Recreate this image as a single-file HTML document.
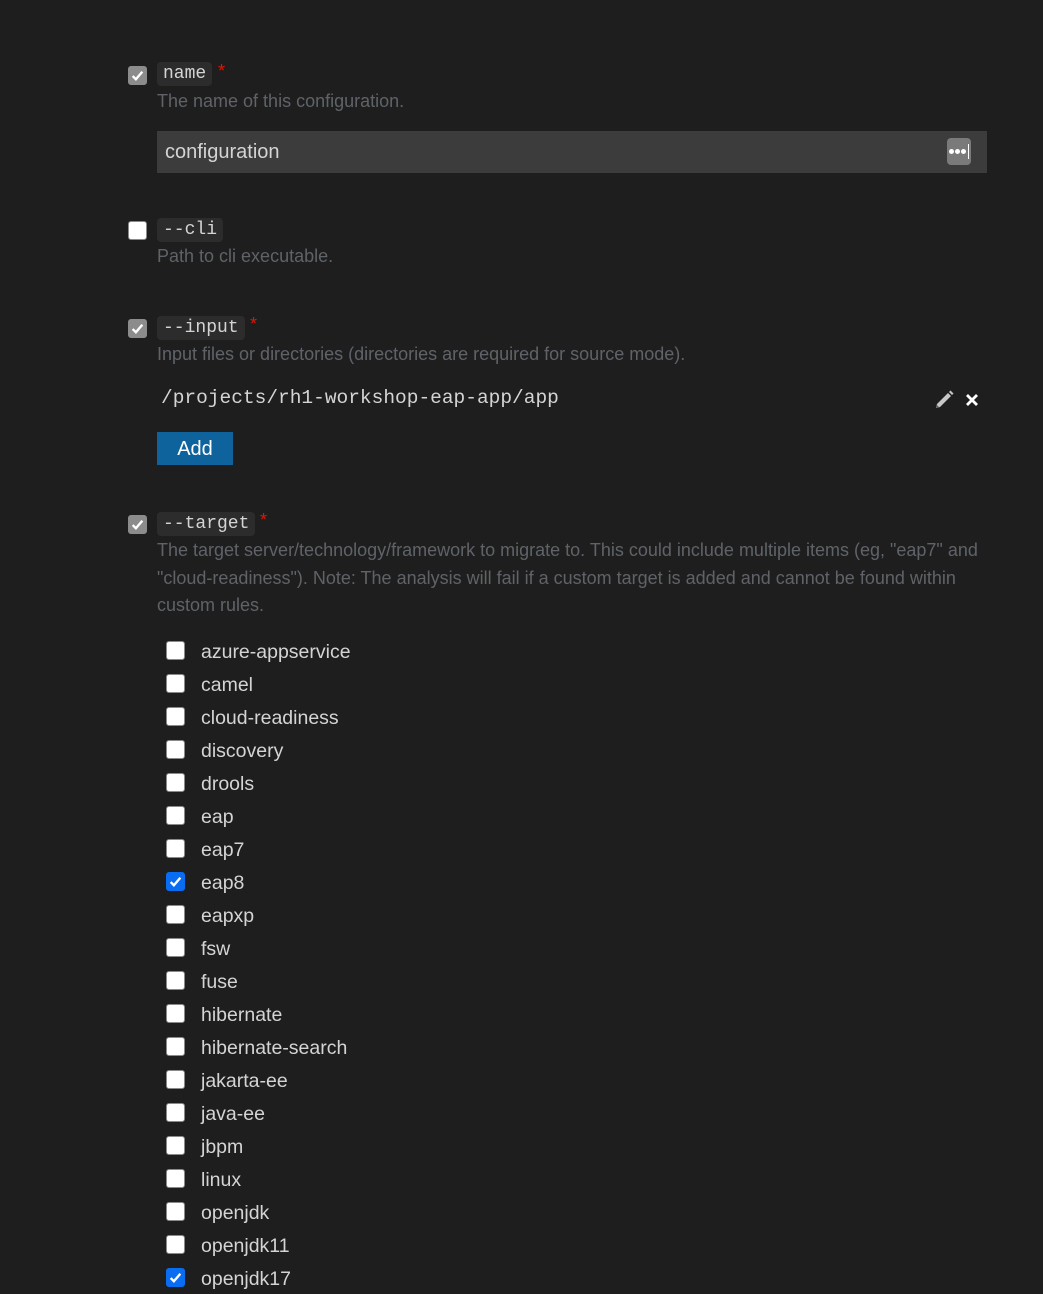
<!DOCTYPE html>
<html><head><meta charset="utf-8"><style>
html,body{margin:0;padding:0;background:#1e1e1e;width:1043px;height:1294px;overflow:hidden;position:relative;font-family:"Liberation Sans","DejaVu Sans",sans-serif}
.a{position:absolute}
.cb{position:absolute;width:17px;height:17px;border-radius:3px;background:#fff;border:1px solid #8a8a8a}
.dis{background:#8c8c8c;border-color:#8c8c8c}
.chk{background:#0a6cf0;border-color:#0a6cf0}
.cb svg{position:absolute;left:1px;top:1px}
.tag{position:absolute;height:24px;line-height:24px;padding:0 6px;background:#2c2c2c;border-radius:4px;color:#d4d4d4;font-family:"Liberation Mono",monospace;font-size:18px}
.star{position:absolute;color:#e51400;font-size:18px}
.desc{position:absolute;left:157px;color:#5f6368;font-size:18px;white-space:nowrap;line-height:27.5px}
.item{position:absolute;left:201px;color:#d4d4d4;font-size:19.5px;white-space:nowrap}
</style></head><body>

<div class="cb dis" style="left:128px;top:66px"><svg width="15" height="15" viewBox="0 0 14 14"><path d="M2.5 7.5l3 3 6-7" stroke="#fff" stroke-width="2.2" fill="none"/></svg></div>
<div class="tag" style="left:157px;top:62px">name</div>
<div class="star" style="left:218px;top:61px">*</div>
<div class="desc" style="top:88px">The name of this configuration.</div>
<div class="a" style="left:157px;top:131px;width:830px;height:42px;background:#3c3c3c"></div>
<div class="a" style="left:165px;top:141px;color:#d4d4d4;font-size:20px">configuration</div>
<div class="a" style="left:947px;top:138px;width:24px;height:27px;background:#7a7a7a;border-radius:4px"></div>
<div class="a" style="left:949px;top:149px;width:5px;height:5px;border-radius:50%;background:#fff"></div>
<div class="a" style="left:955px;top:149px;width:5px;height:5px;border-radius:50%;background:#fff"></div>
<div class="a" style="left:961px;top:149px;width:5px;height:5px;border-radius:50%;background:#fff"></div>
<div class="a" style="left:968px;top:144px;width:1px;height:15px;background:#fff"></div>

<div class="cb" style="left:128px;top:221px"></div>
<div class="tag" style="left:157px;top:218px">--cli</div>
<div class="desc" style="top:243px">Path to cli executable.</div>

<div class="cb dis" style="left:128px;top:319px"><svg width="15" height="15" viewBox="0 0 14 14"><path d="M2.5 7.5l3 3 6-7" stroke="#fff" stroke-width="2.2" fill="none"/></svg></div>
<div class="tag" style="left:157px;top:316px">--input</div>
<div class="star" style="left:250px;top:314px">*</div>
<div class="desc" style="top:341px">Input files or directories (directories are required for source mode).</div>
<div class="a" style="left:161px;top:387px;color:#d4d4d4;font-family:'Liberation Mono',monospace;font-size:19.5px">/projects/rh1-workshop-eap-app/app</div>
<svg class="a" style="left:933px;top:389px" width="22" height="22" viewBox="0 0 22 22"><path d="M3 19l1-4L15 4l3 3L7 18z" fill="#c8c8c8"/><path d="M16 3l1.5-1.5 3 3L19 6z" fill="#c8c8c8"/><path d="M3 19l1-3 2 2z" fill="#666"/></svg>
<svg class="a" style="left:964px;top:392px" width="16" height="16" viewBox="0 0 16 16"><path d="M3 3l10 10M13 3L3 13" stroke="#fff" stroke-width="2.8"/></svg>
<div class="a" style="left:157px;top:432px;width:76px;height:33px;background:#0e639c;color:#fff;font-size:20px;line-height:35px;text-align:center">Add</div>

<div class="cb dis" style="left:128px;top:515px"><svg width="15" height="15" viewBox="0 0 14 14"><path d="M2.5 7.5l3 3 6-7" stroke="#fff" stroke-width="2.2" fill="none"/></svg></div>
<div class="tag" style="left:157px;top:512px">--target</div>
<div class="star" style="left:260px;top:510px">*</div>
<div class="desc" style="top:537px">The target server/technology/framework to migrate to. This could include multiple items (eg, "eap7" and<br>"cloud-readiness"). Note: The analysis will fail if a custom target is added and cannot be found within<br>custom rules.</div>

<div id="list"></div>
<script>
var items=["azure-appservice","camel","cloud-readiness","discovery","drools","eap","eap7","eap8","eapxp","fsw","fuse","hibernate","hibernate-search","jakarta-ee","java-ee","jbpm","linux","openjdk","openjdk11","openjdk17"];
var h="";
items.forEach(function(t,i){var y=651+i*33;var c=(t=="eap8"||t=="openjdk17");
h+='<div class="cb'+(c?' chk':'')+'" style="left:166px;top:'+(y-10)+'px">'+(c?'<svg width="15" height="15" viewBox="0 0 14 14"><path d="M2.5 7.5l3 3 6-7" stroke="#fff" stroke-width="2.2" fill="none"/></svg>':'')+'</div>';
h+='<div class="item" style="top:'+(y-10)+'px">'+t+'</div>';});
document.getElementById("list").innerHTML=h;
</script>
</body></html>
